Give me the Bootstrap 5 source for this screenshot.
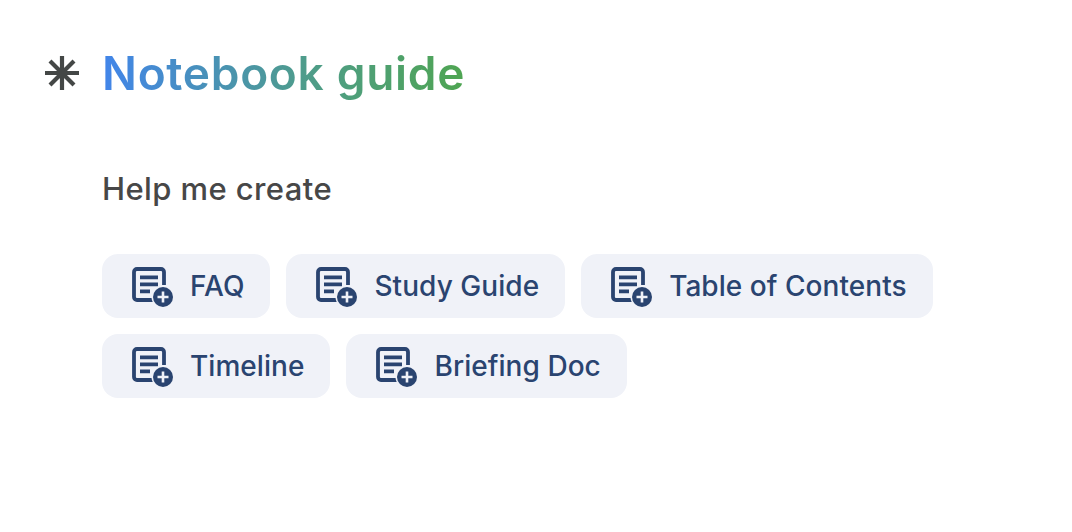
<!DOCTYPE html>
<html lang="en">

<head>
    <meta charset="UTF-8" />
    <meta name="viewport" content="width=device-width, initial-scale=1.0" />
    <title>Notebook guide</title>
    <link href="https://cdn.jsdelivr.net/npm/bootstrap@5.3.0/dist/css/bootstrap.min.css" rel="stylesheet" />
    <style>
        body {
            font-family: "Inter", "Open Sans", sans-serif;
            background-color: #fff;
        }

        .guide-wrap {
            padding: 45px 0 0 45px;
        }

        .guide-star {
            width: 34px;
            height: 34px;
            margin-right: 23px;
            flex-shrink: 0;
        }

        .guide-title {
            font-size: 46px;
            line-height: 56px;
            font-weight: 600;
            letter-spacing: 0.7px;
            margin: 0;
            width: fit-content;
            background: linear-gradient(90deg, #4285ea 0%, #4e9c8c 55%, #4fa552 100%);
            -webkit-background-clip: text;
            background-clip: text;
            color: transparent;
        }

        .guide-body {
            margin-left: 57px;
        }

        .guide-sub {
            font-size: 31px;
            line-height: 36px;
            font-weight: 500;
            letter-spacing: 0.4px;
            color: #474747;
            margin: 70px 0 47px;
        }

        .chip-row {
            gap: 16px;
            margin-bottom: 16px;
        }

        .chip-btn {
            height: 64px;
            padding: 0 26px 0 30px;
            gap: 17px;
            border-radius: 16px;
            background-color: #f0f2f8;
            color: #2a4470;
            font-size: 28px;
            font-weight: 500;
            letter-spacing: 0.05px;
        }

        .chip-icon {
            width: 41px;
            height: 40px;
            margin-top: 2px;
            flex-shrink: 0;
        }
    </style>
</head>

<body>
    <svg width="0" height="0" class="position-absolute">
        <symbol id="noteAdd" viewBox="0 0 41 40">
            <path d="M21 33H5A3 3 0 0 1 2 30V5A3 3 0 0 1 5 2h24A3 3 0 0 1 32 5V18" fill="none" stroke="currentColor" stroke-width="3.800" />
            <path d="M8 8.500h18v3.800H8zM8 15.500h18v3.800H8zM8 22.500h10v3.800H8z" fill="currentColor" />
            <circle cx="31" cy="30" r="11.500" fill="#f0f2f8" />
            <circle cx="31" cy="30" r="10" fill="currentColor" />
            <path d="M29.700 24.500h2.600v4.200h4.200v2.600h-4.200v4.200h-2.600v-4.200h-4.200v-2.600h4.200z" fill="#f0f2f8" />
        </symbol>
    </svg>

    <div class="guide-wrap">
        <div class="d-flex align-items-center">
            <svg class="guide-star" viewBox="0 0 34 34" fill="none" stroke="#444746" stroke-width="4.200">
                <path d="M17 0v34M0 17h34M5 5l24 24M29 5L5 29" />
            </svg>
            <h1 class="guide-title">Notebook guide</h1>
        </div>
        <div class="guide-body">
            <p class="guide-sub">Help me create</p>
            <div class="d-flex chip-row">
                <button class="btn d-flex align-items-center border-0 chip-btn"><svg class="chip-icon"><use href="#noteAdd" /></svg>FAQ</button>
                <button class="btn d-flex align-items-center border-0 chip-btn"><svg class="chip-icon"><use href="#noteAdd" /></svg>Study Guide</button>
                <button class="btn d-flex align-items-center border-0 chip-btn"><svg class="chip-icon"><use href="#noteAdd" /></svg>Table of Contents</button>
            </div>
            <div class="d-flex chip-row">
                <button class="btn d-flex align-items-center border-0 chip-btn"><svg class="chip-icon"><use href="#noteAdd" /></svg>Timeline</button>
                <button class="btn d-flex align-items-center border-0 chip-btn"><svg class="chip-icon"><use href="#noteAdd" /></svg>Briefing Doc</button>
            </div>
        </div>
    </div>
</body>

</html>
